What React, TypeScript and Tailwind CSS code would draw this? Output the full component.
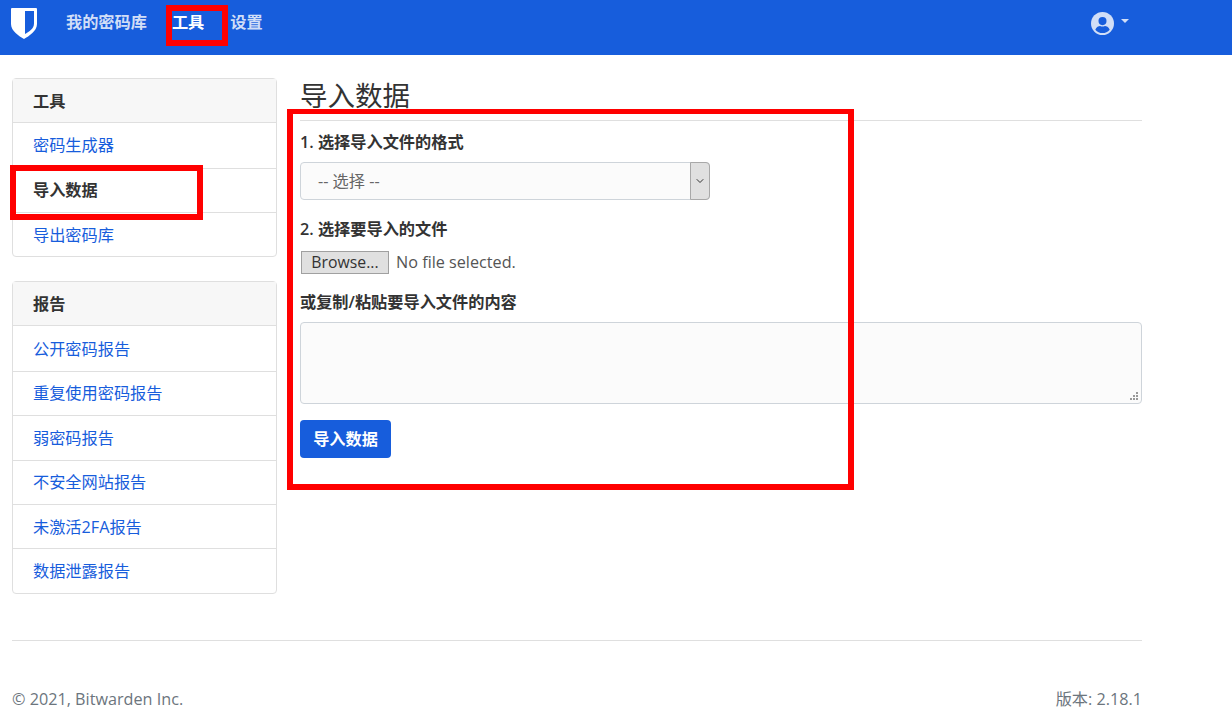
import { ChevronDown } from "lucide-react";

const tools = [
  { label: "密码生成器" },
  { label: "导入数据", active: true },
  { label: "导出密码库" },
];

const reports = [
  { label: "公开密码报告" },
  { label: "重复使用密码报告" },
  { label: "弱密码报告" },
  { label: "不安全网站报告" },
  { label: "未激活2FA报告" },
  { label: "数据泄露报告" },
];

function Shield() {
  return (
    <svg width="26" height="31" viewBox="0 0 26 31" className="block">
      <path
        fill="#fff"
        fillRule="evenodd"
        d="M1 0h24a1 1 0 0 1 1 1v15c0 7-8 12-13 15C8 28 0 23 0 16V1a1 1 0 0 1 1-1Zm13 3v23c3.500-2 9-5 9-10.500V3h-9Z"
      />
    </svg>
  );
}

function UserCircle() {
  return (
    <svg width="23" height="23" viewBox="0 0 24 24" className="block">
      <circle cx="12" cy="12" r="12" fill="#d1def7" />
      <circle cx="12" cy="9.500" r="4.200" fill="#175ddc" />
      <path d="M4.500 18.500c1-3 3.500-4 5-4 1.500.7 3.500.7 5 0 1.500 0 4 1 5 4-2 2.300-4.500 3.500-7.500 3.500s-5.500-1.200-7.500-3.500Z" fill="#175ddc" />
    </svg>
  );
}

function Card({
  title,
  items,
  className,
}: {
  title: string;
  items: { label: string; active?: boolean }[];
  className?: string;
}) {
  return (
    <div className={`rounded border border-[#dfdfdf] bg-white ${className ?? ""}`}>
      <div className="flex h-[44.200px] items-center border-b border-[#dfdfdf] bg-[#f7f7f7] px-5 font-semibold text-[#333]">
        {title}
      </div>
      {items.map((item, i) => (
        <div
          key={item.label}
          className={`flex h-[44.400px] items-center px-5 ${i > 0 ? "border-t border-[#dfdfdf]" : ""} ${
            item.active ? "font-semibold text-[#333]" : "text-[#175ddc]"
          }`}
        >
          {item.label}
        </div>
      ))}
    </div>
  );
}

export default function App() {
  return (
    <div className="relative h-[725px] w-[1232px] overflow-hidden bg-white font-['Open_Sans','Noto_Sans_CJK_SC',sans-serif] text-[16.200px] leading-6 text-[#333]">
      <nav className="flex h-[55px] bg-[#175ddc]">
        <div className="mt-[8px] ml-[11px] h-[31px]">
          <Shield />
        </div>
        <div className="mt-[10px] ml-[29px] flex h-6 text-[#d1def7]">
          <span className="font-semibold">我的密码库</span>
          <span className="ml-[25px] font-semibold text-white">工具</span>
          <span className="ml-[26px] font-semibold">设置</span>
        </div>
        <div className="mt-[12px] mr-[103px] ml-auto flex h-6 items-start">
          <UserCircle />
          <span className="mt-[7px] ml-[7px] h-0 w-0 border-x-[4px] border-t-[4px] border-x-transparent border-t-[#d1def7]" />
        </div>
      </nav>

      <div className="flex w-[1142px] pt-[23px] pl-3">
        <aside className="w-[265px] shrink-0">
          <Card title="工具" items={tools} />
          <Card title="报告" items={reports} className="mt-[23.800px]" />
        </aside>

        <main className="ml-[23px] flex-1">
          <div className="h-[43px] border-b border-[#dfdfdf]">
            <h1 className="text-[27.500px] leading-[36px] font-normal text-[#333]">导入数据</h1>
          </div>
          <div className="mt-[9px] font-semibold">1. 选择导入文件的格式</div>
          <div className="mt-[8px] flex h-[38px] w-[410px] rounded border border-[#ced4da] bg-[#fbfbfb]">
            <div className="flex flex-1 items-center pl-[17px] text-[#666]">-- 选择 --</div>
            <div className="-my-px -mr-px flex w-[20px] items-center justify-center rounded-r border border-[#a8a8a8] bg-[#e0e0e0]">
              <ChevronDown size={12} strokeWidth={2} className="text-[#333]" />
            </div>
          </div>
          <div className="mt-[17px] font-semibold">2. 选择要导入的文件</div>
          <div className="mt-[9px] flex h-[24px] items-center">
            <div className="ml-px flex h-[23px] w-[88px] items-center justify-center border border-[#a0a0a0] bg-[#e0e0e0] text-[15.800px] text-[#333]">
              Browse...
            </div>
            <span className="ml-[7px] text-[#555]">No file selected.</span>
          </div>
          <div className="mt-[16px] font-semibold">或复制/粘贴要导入文件的内容</div>
          <div className="relative mt-[8px] h-[82px] rounded border border-[#ced4da] bg-[#fbfbfb]">
            <svg width="10" height="10" viewBox="0 0 10 10" className="absolute right-[2px] bottom-[2px]">
              <g fill="#999">
                <rect x="7" y="1" width="2" height="2" />
                <rect x="4" y="4" width="2" height="2" />
                <rect x="7" y="4" width="2" height="2" />
                <rect x="1" y="7" width="2" height="2" />
                <rect x="4" y="7" width="2" height="2" />
                <rect x="7" y="7" width="2" height="2" />
              </g>
            </svg>
          </div>
          <button className="mt-[16px] flex h-[38px] w-[91px] items-center justify-center rounded bg-[#175ddc] font-semibold text-white">
            导入数据
          </button>
        </main>
      </div>

      <footer className="absolute top-[640px] left-3 w-[1130px] border-t border-[#dfdfdf] pt-[46px]">
        <div className="flex justify-between text-[#6c757d]">
          <span>© 2021, Bitwarden Inc.</span>
          <span>版本: 2.18.1</span>
        </div>
      </footer>

      {/* red annotation boxes drawn over the page */}
      <div className="absolute top-[5px] left-[166px] h-[41px] w-[62px] border-[6px] border-[#f00]" />
      <div className="absolute top-[165px] left-[10px] h-[55px] w-[193px] border-[6px] border-[#f00]" />
      <div className="absolute top-[109px] left-[287px] h-[381px] w-[567px] border-[6px] border-t-[5px] border-[#f00]" />
    </div>
  );
}
